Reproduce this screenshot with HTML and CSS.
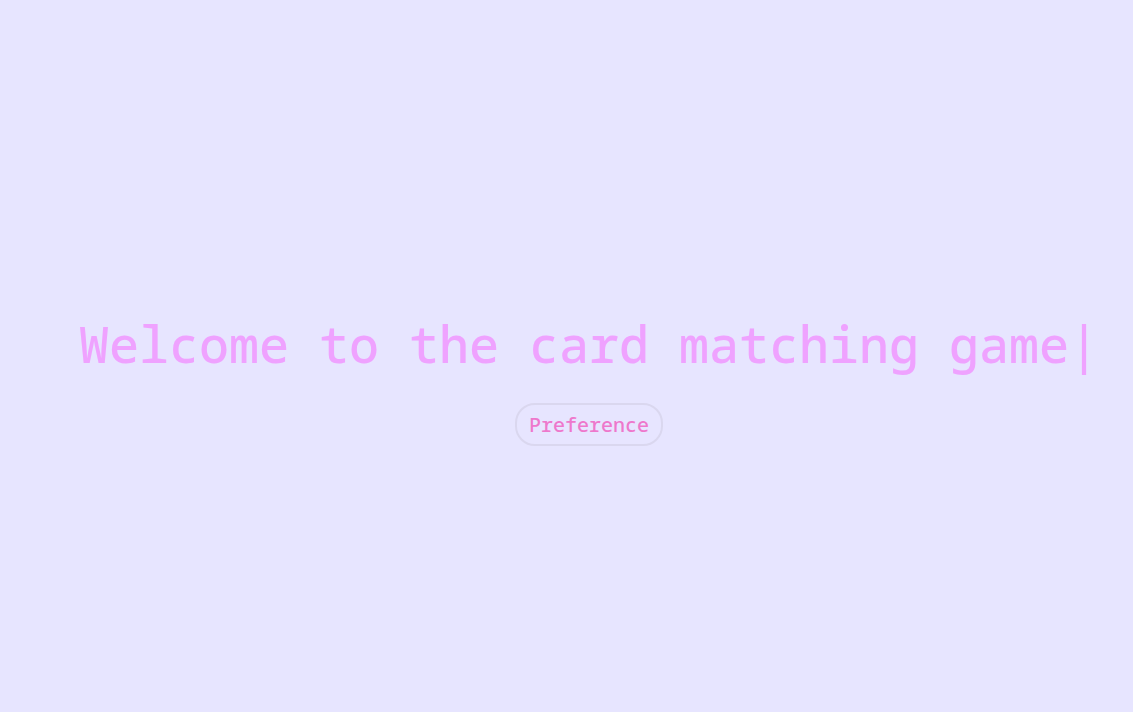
FILE: index.html
```html
<!DOCTYPE html>
<html lang="en">
<head>
<meta charset="utf-8">
<title>Card matching game</title>
<link rel="stylesheet" href="styles.css">
</head>
<body>
<main class="welcome">
  <h1 class="title">Welcome to the card matching game<span class="cursor">|</span></h1>
  <button class="preference" type="button">Preference</button>
</main>
</body>
</html>
```

FILE: styles.css
```css
body {
  margin: 0;
  background: #e7e5ff;
  font-family: "Noto Sans Mono", "DejaVu Sans Mono", monospace;
}
.welcome {
  min-height: 100vh;
  box-sizing: border-box;
  padding: 39px 0 0 45px;
  display: flex;
  flex-direction: column;
  align-items: center;
  justify-content: center;
  gap: 21px;
}
.title {
  margin: 0;
  font-size: 50px;
  line-height: 76px;
  font-weight: 500;
  color: #efa2ff;
  white-space: nowrap;
}
.preference {
  padding: 6px 12px;
  border: 2px solid #dad7ef;
  border-radius: 20px;
  background: transparent;
  color: #ee78cc;
  font: inherit;
  font-size: 20px;
  font-weight: 500;
  line-height: 27px;
}
```
